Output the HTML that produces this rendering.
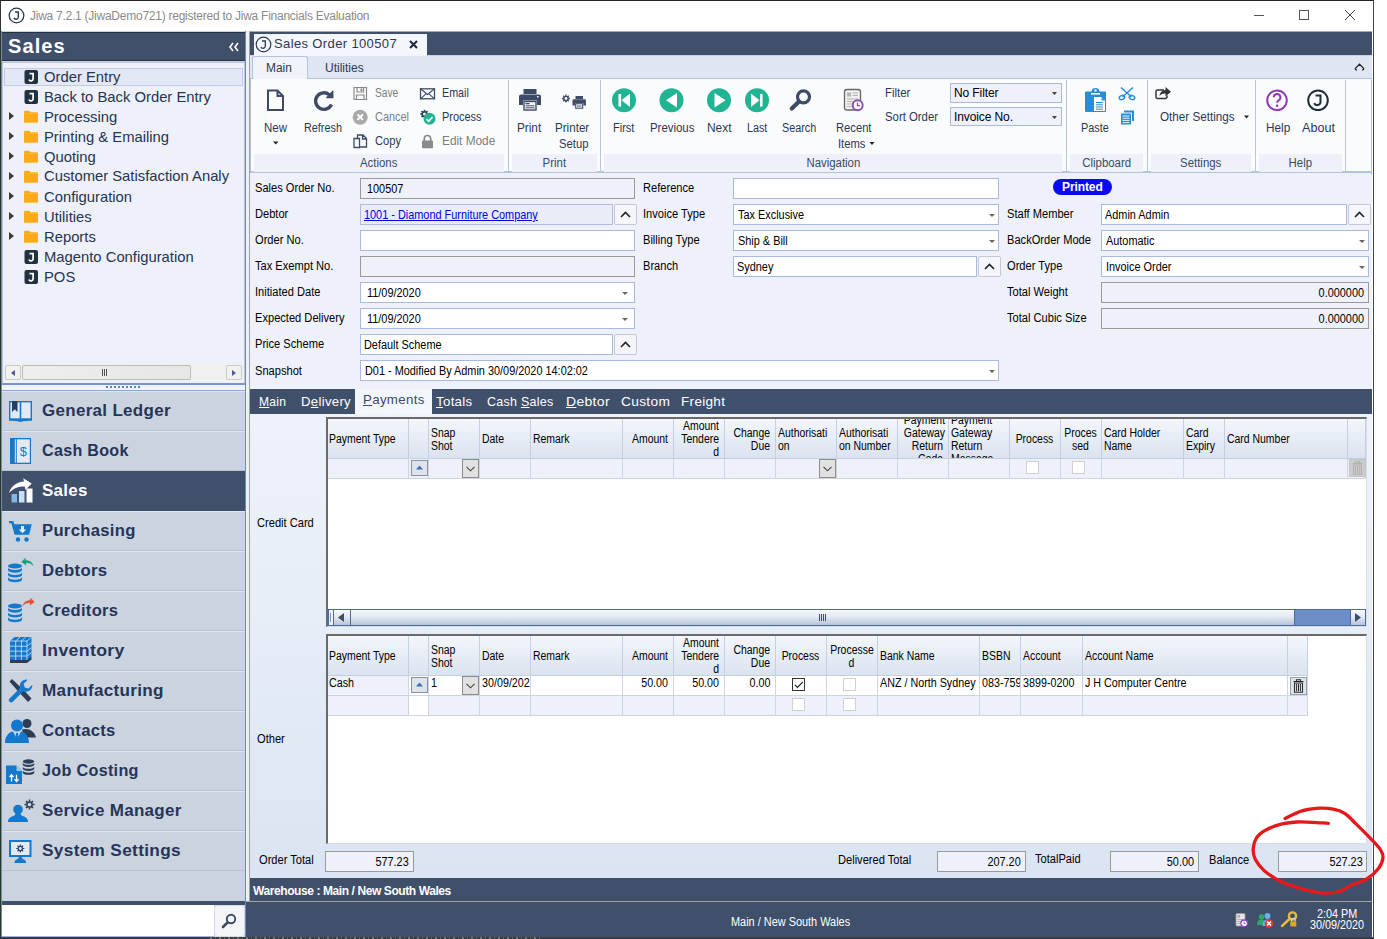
<!DOCTYPE html>
<html>
<head>
<meta charset="utf-8">
<title>Jiwa</title>
<style>
*{box-sizing:border-box;margin:0;padding:0}
html,body{width:1387px;height:939px;overflow:hidden;background:#fff}
body{font-family:"Liberation Sans",sans-serif;font-size:12px;color:#000;position:relative}
.a{position:absolute}
.t{position:absolute;white-space:nowrap;line-height:1}
svg{position:absolute;overflow:visible}
/* window */
#win{left:0;top:0;width:1374px;height:939px;background:#fff;border-left:1px solid #333;border-top:1px solid #222;border-right:1px solid #444}
#app{left:1px;top:31px;width:1371px;height:906px;background:#f0f1f5;border-right:1px solid #a0a0a0}
.dk{background:#40506b}
/* left */
#lp{left:2px;top:31px;width:243px;height:906px;background:#cbd3df}
#tree{left:2px;top:62px;width:243px;height:322px;background:#eef1f9;border:1px solid #b8c4dc}
.tr{position:absolute;left:44px;font-size:14.8px;color:#27344f;white-space:nowrap;line-height:1}
.nb{position:absolute;left:2px;width:243px;height:40px;border-top:1px solid #dfe5ee;border-bottom:1px solid #b9c2d0;background:#cbd3df}
.nb span{position:absolute;left:40px;top:11px;font-weight:bold;font-size:16px;color:#25355a;white-space:nowrap;line-height:1;letter-spacing:.3px;transform-origin:0 0}
/* ribbon */
.rl{position:absolute;font-size:12px;color:#2a3852;white-space:nowrap;line-height:1;transform-origin:0 0}
.rg{position:absolute;top:154px;height:18px;background:#eef1f9;font-size:12px;color:#3a4a66;text-align:center;line-height:18px}
.rs{position:absolute;top:80px;height:92px;width:1px;background:#b9c6de}
/* form */
.fl{position:absolute;font-size:12px;color:#000;white-space:nowrap;line-height:1;transform:scaleX(.925);transform-origin:0 0}
.in{position:absolute;height:21px;background:#fff;border:1px solid #a9bbdc;font-size:12px;line-height:20px;padding-left:4px;white-space:nowrap;overflow:hidden}
.n{display:inline-block;transform:scaleX(.908);transform-origin:0 50%}
.ft .n,.rt .n{transform-origin:100% 50%}
.ro{background:#eef1f9;border-color:#9a9a9a}
.ar:after{content:"";position:absolute;right:3px;top:9px;border:3px solid transparent;border-top:3px solid #666;border-bottom:0}
.dt:after{right:6px}
.up{position:absolute;width:23px;height:21px;background:#f4f6fb;border:1px solid #c3c9d6;border-radius:2px}
.tb{font-size:13px;letter-spacing:.3px}
.ft{background:#eef1f9;border-color:#9a9a9a;text-align:right;padding-right:4px}
/* grid */
.gh{position:absolute;background:linear-gradient(#f3f6fb,#dbe3f0);border-right:1px solid #c4cfe2;border-bottom:1px solid #c4cfe2;font-size:12px;line-height:13px;overflow:hidden}
.gh>div{transform:scaleX(.87);white-space:nowrap}
.hl{transform-origin:0 0}.hr{transform-origin:100% 0}.hc{transform-origin:50% 0}
.gc span{display:inline-block;transform:scaleX(.895)}
.gc .hl{transform-origin:0 0}.gc .hr{transform-origin:100% 0}
.gc{position:absolute;border-right:1px solid #cdd5e3;border-bottom:1px solid #cdd5e3;background:#eef1f9;font-size:12px;line-height:1;overflow:hidden;white-space:nowrap}
.w{background:#fff}
</style>
</head>
<body>
<div id="win" class="a"></div>
<div id="app" class="a"></div>
<!--TITLE-->
<!-- title bar -->
<svg class="a" style="left:8px;top:7px" width="17" height="17" viewBox="0 0 17 17"><circle cx="8.5" cy="8.5" r="7.3" fill="#fff" stroke="#2b3a4a" stroke-width="1.3"/><path d="M7 5h3.3v5.2a2.3 2.3 0 0 1-4.4.7" fill="none" stroke="#2b3a4a" stroke-width="1.4"/></svg>
<div class="t" id="ttl" style="left:30px;top:10px;font-size:12px;color:#8a8a8a;letter-spacing:-.25px">Jiwa 7.2.1 (JiwaDemo721) registered to Jiwa Financials Evaluation</div>
<div class="a" style="left:1254px;top:15px;width:10px;height:1px;background:#555"></div>
<div class="a" style="left:1299px;top:10px;width:10px;height:10px;border:1px solid #555"></div>
<svg style="left:1345px;top:10px" width="10" height="10" viewBox="0 0 10 10"><path d="M0 0L10 10M10 0L0 10" stroke="#444" stroke-width="1"/></svg>
<!-- left panel -->
<div class="a" style="left:1px;top:31px;width:245px;height:906px;background:#6b8bbd"></div>
<div id="lp" class="a"></div>
<div class="a dk" style="left:2px;top:32px;width:243px;height:29px;border-top:1px solid #222f44;border-bottom:1px solid #222f44"></div>
<div class="t" id="saleshdr" style="left:8px;top:36px;font-size:20px;font-weight:bold;color:#fff;letter-spacing:1.1px">Sales</div>
<svg style="left:229px;top:43px" width="10" height="8" viewBox="0 0 10 8"><path d="M4 0L1 4L4 8M9 0L6 4L9 8" fill="none" stroke="#fff" stroke-width="1.6"/></svg>
<div id="tree" class="a"></div>
<div class="a" style="left:4px;top:68px;width:239px;height:18px;background:#e3e8f6;border:1px solid #c3cbe0"></div>
<!-- tree rows -->
<div class="tr" style="top:70px">Order Entry</div>
<div class="tr" style="top:90px">Back to Back Order Entry</div>
<div class="tr" style="top:110px">Processing</div>
<div class="tr" style="top:130px">Printing &amp; Emailing</div>
<div class="tr" style="top:150px">Quoting</div>
<div class="tr" style="top:169px">Customer Satisfaction Analy</div>
<div class="tr" style="top:190px">Configuration</div>
<div class="tr" style="top:210px">Utilities</div>
<div class="tr" style="top:230px">Reports</div>
<div class="tr" style="top:250px">Magento Configuration</div>
<div class="tr" style="top:270px">POS</div>
<!--TREEICONS-->
<!-- tree scrollbar -->
<div class="a" style="left:3px;top:363px;width:241px;height:20px;background:#f0f0f1"></div>
<div class="a" style="left:5px;top:365px;width:16px;height:15px;background:#f1f1f1;border:1px solid #c9c9c9;border-radius:2px"></div>
<div class="a" style="left:22px;top:365px;width:169px;height:15px;background:linear-gradient(90deg,#eee,#e6e6e6);border:1px solid #bdbdbd;border-radius:2px"></div>
<div class="a" style="left:226px;top:365px;width:16px;height:15px;background:#f1f1f1;border:1px solid #c9c9c9;border-radius:2px"></div>
<svg style="left:11px;top:370px" width="4" height="6" viewBox="0 0 4 6"><path d="M4 0L0 3L4 6z" fill="#4a5b8c"/></svg>
<svg style="left:232px;top:370px" width="4" height="6" viewBox="0 0 4 6"><path d="M0 0L4 3L0 6z" fill="#4a5b8c"/></svg>
<div class="a" style="left:102px;top:369px;width:1px;height:7px;background:#555;box-shadow:2px 0 0 #555,4px 0 0 #555"></div>
<!-- splitter -->
<div class="a" style="left:2px;top:383px;width:243px;height:8px;background:#eef3fc;border-top:2px solid #7b96c4;border-bottom:1px solid #8fa6cf"></div>
<div class="a" style="left:106px;top:386px;width:34px;height:2px;background:repeating-linear-gradient(90deg,#5a7fc8 0 2px,transparent 2px 4px)"></div>
<!-- nav buttons -->
<div class="nb" style="top:391px"><span style="transform:scaleX(1.060)">General Ledger</span></div>
<div class="nb" style="top:431px"><span style="transform:scaleX(1.005)">Cash Book</span></div>
<div class="nb" style="top:471px;background:#40506b;border-color:#40506b"><span style="color:#fff;transform:scaleX(1.058)">Sales</span></div>
<div class="nb" style="top:511px"><span style="transform:scaleX(1.039)">Purchasing</span></div>
<div class="nb" style="top:551px"><span style="transform:scaleX(1.047)">Debtors</span></div>
<div class="nb" style="top:591px"><span style="transform:scaleX(1.034)">Creditors</span></div>
<div class="nb" style="top:631px"><span style="transform:scaleX(1.107)">Inventory</span></div>
<div class="nb" style="top:671px"><span style="transform:scaleX(1.068)">Manufacturing</span></div>
<div class="nb" style="top:711px"><span style="transform:scaleX(1.040)">Contacts</span></div>
<div class="nb" style="top:751px"><span style="transform:scaleX(1.011)">Job Costing</span></div>
<div class="nb" style="top:791px"><span style="transform:scaleX(1.061)">Service Manager</span></div>
<div class="nb" style="top:831px"><span style="transform:scaleX(1.077)">System Settings</span></div>
<svg style="left:0;top:0" width="250" height="939" viewBox="0 0 250 939">
<defs>
<g id="coins"><ellipse cx="0" cy="0" rx="7" ry="2.6"/><path d="M-7 1.5v2.6a7 2.6 0 0 0 14 0v-2.6a7 2.6 0 0 1-14 0z"/><path d="M-7 6.3v2.6a7 2.6 0 0 0 14 0v-2.6a7 2.6 0 0 1-14 0z"/><path d="M-7 11.1v2.6a7 2.6 0 0 0 14 0v-2.6a7 2.6 0 0 1-14 0z"/></g>
<g id="gear"><circle r="2.6" fill="none" stroke="#2c3e55" stroke-width="1.5"/><path d="M0-5v2M0 3v2M-5 0h2M3 0h2M-3.5-3.5l1.4 1.4M2.1 2.1l1.4 1.4M-3.5 3.5l1.4-1.4M2.1-2.1l1.4-1.4" stroke="#2c3e55" stroke-width="1.5"/></g>
<g id="fold"><path d="M0 2.2a1 1 0 0 1 1-1h4.2l1.5 1.6h6.3a1 1 0 0 1 1 1v8.5a1 1 0 0 1-1 1h-12a1 1 0 0 1-1-1z" fill="#fbab18"/><path d="M0 4.6h14v-.9a1 1 0 0 0-1-1h-6.3l-1.2 1.1h-5.5z" fill="#ffc24a" opacity=".55"/></g>
<g id="jic"><rect width="13.5" height="14" rx="2" fill="#22313f"/><path d="M5 3.6h3.6v5.2a2.1 2.1 0 0 1-4.1.6" fill="none" stroke="#fff" stroke-width="1.7"/></g>
<path id="tri" d="M0 0L5 4L0 8z" fill="#3a3a3a"/>
</defs>
<!-- tree icons -->
<use href="#jic" x="24.5" y="70"/><use href="#jic" x="24.5" y="90"/><use href="#jic" x="24.5" y="250"/><use href="#jic" x="24.5" y="270"/>
<use href="#fold" x="24" y="109.5"/><use href="#fold" x="24" y="129.5"/><use href="#fold" x="24" y="149.5"/><use href="#fold" x="24" y="169.5"/><use href="#fold" x="24" y="189.5"/><use href="#fold" x="24" y="209.5"/><use href="#fold" x="24" y="229.5"/>
<use href="#tri" x="9" y="112"/><use href="#tri" x="9" y="132"/><use href="#tri" x="9" y="152"/><use href="#tri" x="9" y="172"/><use href="#tri" x="9" y="192"/><use href="#tri" x="9" y="212"/><use href="#tri" x="9" y="232"/>
<!-- General Ledger -->
<g><rect x="9.7" y="401.7" width="21.6" height="17.6" fill="#e4eaf3" stroke="#1479cc" stroke-width="1.4"/><path d="M20.5 401v19" stroke="#1479cc" stroke-width="1.6"/><path d="M9 418.5h23v2.3c-4 0-8 0-11.5 1.2c-3.500-1.200-7.500-1.200-11.500-1.200z" fill="#1479cc"/><path d="M12 401h5.500v11l-2.750-2.800l-2.750 2.800z" fill="#2c3e55"/></g>
<!-- Cash Book -->
<g><rect x="10" y="438" width="21" height="26" fill="#1479cc"/><rect x="14.8" y="439.300" width="1" height="23.400" fill="#e4eaf3"/><rect x="16.800" y="439.300" width="13" height="23.400" fill="#e4eaf3"/><text x="23.300" y="456" font-family="Liberation Sans" font-size="13" fill="#1479cc" text-anchor="middle">$</text></g>
<!-- Sales -->
<g><rect x="11.500" y="494" width="5.500" height="8.500" fill="#7fb6e6"/><rect x="19" y="491" width="5.500" height="11.500" fill="#c6e0f5"/><rect x="26.500" y="488.500" width="6" height="14" fill="#fff"/><path d="M9 493c2-7 8-11 15-11.500l-.8-3.300l8.500 5.300l-6.200 6.500l-.7-3.300c-6-.8-11.500 1.500-15.800 6.300z" fill="#fff"/></g>
<!-- Purchasing -->
<g fill="#1479cc"><path d="M9 521h4.300l1 3.300h17.500l-2.700 10.500h-14.500l-3.200-11.500h-2.400z"/><circle cx="18" cy="539.500" r="2.200"/><circle cx="26.500" cy="539.500" r="2.200"/><path d="M21 526h3v3.500h2.300l-3.800 3.800l-3.800-3.800h2.300z" fill="#e4eaf3"/></g>
<!-- Debtors -->
<g fill="#1479cc"><use href="#coins" x="15" y="566"/></g>
<path d="M33.500 566.500c-1.500-2.800-4.500-3.800-7.500-3.500l.3 2.600l-5-3.700l4.200-4.200l.3 2.600c4 0 7 2 7.700 6.200z" fill="#1aa37a"/>
<!-- Creditors -->
<g fill="#1479cc"><use href="#coins" x="15" y="606"/></g>
<path d="M22.500 606.500c.7-4.200 3.700-6.200 7.700-6.200l.3-2.600l4.200 4.200l-5 3.700l.3-2.600c-3-.3-6 .7-7.500 3.500z" fill="#e8503a"/>
<!-- Inventory -->
<g><path d="M10 660v3h17l4.500-3.500v-3z" fill="#2c3e55"/><path d="M10 641l4.500-4h17l0 19.500l-4.500 3.500h-17z" fill="#1479cc"/><path d="M10 646.200h17l4.500-3.500M10 651.200h17l4.500-3.500M10 656h17l4.500-3.500M15.700 641v19M21.400 641v19M27 641v19M14.500 637l-0 0M10 641h17l4.500-4M20 637l-4.300 4M25.700 637l-4.300 4" stroke="#cfe3f6" stroke-width=".8" fill="none"/></g>
<!-- Manufacturing -->
<g><path d="M9.500 681.500l2.500-2.500l14 13.500l5.500 6l-3.500 3.500l-5.500-6l-3-3z" fill="#2c3e55"/><path d="M26 679.500a6.500 6.500 0 0 0-6 8.500l-10.500 10.500a2.300 2.300 0 0 0 3.300 3.300l10.500-10.500a6.500 6.500 0 0 0 9-6.500l-3.800 3.800l-3.800-1l-1-3.800l3.800-3.800a6.500 6.500 0 0 0-1.500-.5z" fill="#1479cc"/></g>
<!-- Contacts -->
<g><circle cx="27" cy="723.500" r="4.500" fill="#2c3e55"/><path d="M22 729.500c6-2 12.500 1 14 8h-12z" fill="#2c3e55"/><circle cx="17" cy="725.500" r="6" fill="#1479cc"/><path d="M5 743c0-7 4-11 8-11.500l4 8l4-8c4 .5 8 4.500 8 11.500z" fill="#1479cc"/><path d="M16 733h2l.8 6l-1.800 2.500l-1.800-2.500z" fill="#1479cc"/></g>
<!-- Job Costing -->
<g><path d="M6 765.500h10.500l5.500 5.500v13h-16z" fill="#1479cc"/><path d="M16.500 765.500v5.500h5.500z" fill="#9cc9ee"/><path d="M11.500 775v6.500M9.500 777l2-2.300l2 2.300M16.500 774.800v6.500M14.500 779.300l2 2.300l2-2.300" stroke="#fff" stroke-width="1.300" fill="none"/><g fill="#2c3e55" transform="translate(28.500 761.500) scale(.82)"><use href="#coins"/></g></g>
<!-- Service Manager -->
<g><circle cx="18" cy="809.500" r="4.800" fill="#1479cc"/><path d="M8 822c0-4 3-5.500 6.500-6.500l1.500-2.500h4l1.500 2.500c3.500 1 6.500 2.500 6.500 6.500z" fill="#1479cc"/><use href="#gear" x="29.500" y="804.500"/></g>
<!-- System Settings -->
<g><rect x="10" y="841" width="20.500" height="15" fill="#e4eaf3" stroke="#1479cc" stroke-width="2"/><use href="#gear" x="20.300" y="848.500" transform="translate(4.060 169.700) scale(.8)"/><path d="M14.500 863c0-3 2.500-4.500 5.800-4.500s5.800 1.500 5.800 4.500z" fill="#1479cc"/><circle cx="20.300" cy="858.500" r="2" fill="#1479cc"/></g>
</svg>

<!-- search -->
<div class="a" style="left:2px;top:901px;width:243px;height:4px;background:#40506b"></div>
<div class="a" style="left:2px;top:905px;width:212px;height:32px;background:#fff;border-bottom:1px solid #9db3da"></div>
<div class="a" style="left:214px;top:905px;width:31px;height:32px;background:#f4f5f8;border:1px solid #d5d8df;border-radius:3px"></div>
<svg style="left:221px;top:913px" width="16" height="16" viewBox="0 0 16 16"><circle cx="10" cy="6" r="4.200" fill="none" stroke="#3d4b66" stroke-width="1.900"/><path d="M6.800 9.300L2 14" stroke="#3d4b66" stroke-width="2.600" stroke-linecap="round"/></svg>
<!--LEFT-->
<div class="a" style="left:249px;top:31px;width:1px;height:906px;background:#a0a0a0"></div><div class="a" style="left:249px;top:31px;width:1123px;height:1px;background:#a9a9a9"></div>
<!--DOCTABS-->
<!-- doc tabs -->
<div class="a dk" style="left:250px;top:32px;width:1122px;height:23px"></div><div class="a" style="left:250px;top:55px;width:1122px;height:1px;background:#c5d3e8"></div>
<div class="a" style="left:254px;top:34px;width:173px;height:22px;background:#f3f6fc"></div>
<svg style="left:255px;top:36px" width="17" height="17" viewBox="0 0 17 17"><circle cx="8.5" cy="8.5" r="7.3" fill="none" stroke="#2b3a4a" stroke-width="1.2"/><path d="M7 5h3.3v5.200a2.300 2.300 0 0 1-4.400.7" fill="none" stroke="#2b3a4a" stroke-width="1.3"/></svg>
<div class="t" id="dtab" style="left:274px;top:37px;font-size:13px;color:#2a3852;letter-spacing:.37px">Sales Order 100507</div>
<svg style="left:409px;top:40px" width="9" height="9" viewBox="0 0 9 9"><path d="M1 1L8 8M8 1L1 8" stroke="#1e2a3e" stroke-width="2"/></svg>
<!-- ribbon tabs -->
<div class="a" style="left:250px;top:56px;width:1122px;height:23px;background:#dfe5f3"></div>
<div class="a" style="left:250px;top:78px;width:1122px;height:95px;background:#fafbfd;border:1px solid #b4c3df;border-width:1px 1px 2px 1px"></div>
<div class="a" style="left:252px;top:56px;width:56px;height:23px;background:#f0f3fa;border:1px solid #b4c3df;border-bottom:0;border-radius:3px 3px 0 0"></div>
<div class="rl" style="left:266px;top:62px;transform:scaleX(0.992)">Main</div>
<div class="rl" style="left:325px;top:62px;transform:scaleX(1.001)">Utilities</div>
<svg style="left:1354px;top:63px" width="11" height="8" viewBox="0 0 11 8"><path d="M3 6.800c-1.500.3-2.300-.8-1.200-1.900L5.500 1.200L9.200 4.900c1.100 1.100.3 2.200-1.200 1.900" fill="none" stroke="#222" stroke-width="1.300"/></svg>
<!-- group label strips -->
<div class="rg" style="left:254px;width:250px"><span style="display:inline-block;transform:scaleX(.95)">Actions</span></div>
<div class="rg" style="left:512px;width:85px"><span style="display:inline-block;transform:scaleX(.95)">Print</span></div>
<div class="rg" style="left:604px;width:458px"><span style="display:inline-block;transform:scaleX(.95)">Navigation</span></div>
<div class="rg" style="left:1070px;width:73px"><span style="display:inline-block;transform:scaleX(.95)">Clipboard</span></div>
<div class="rg" style="left:1151px;width:100px"><span style="display:inline-block;transform:scaleX(.95)">Settings</span></div>
<div class="rg" style="left:1259px;width:83px"><span style="display:inline-block;transform:scaleX(.95)">Help</span></div>
<div class="rs" style="left:508px"></div><div class="rs" style="left:600px"></div><div class="rs" style="left:1066px"></div><div class="rs" style="left:1147px"></div><div class="rs" style="left:1255px"></div><div class="rs" style="left:1345px"></div>
<!-- labels -->
<div class="rl" style="left:264px;top:122px;transform:scaleX(0.958)">New</div>
<div class="rl" style="left:304px;top:122px;transform:scaleX(0.902)">Refresh</div>
<div class="rl" style="left:375px;top:87px;color:#7d7d7d;transform:scaleX(0.848)">Save</div>
<div class="rl" style="left:375px;top:111px;color:#7d7d7d;transform:scaleX(0.910)">Cancel</div>
<div class="rl" style="left:375px;top:135px;transform:scaleX(0.928)">Copy</div>
<div class="rl" style="left:442px;top:87px;transform:scaleX(0.893)">Email</div>
<div class="rl" style="left:442px;top:111px;transform:scaleX(0.909)">Process</div>
<div class="rl" style="left:442px;top:135px;color:#7d7d7d;transform:scaleX(0.985)">Edit Mode</div>
<div class="rl" style="left:517px;top:122px;transform:scaleX(0.980)">Print</div>
<div class="rl" style="left:555px;top:122px;transform:scaleX(0.968)">Printer</div>
<div class="rl" style="left:559px;top:138px;transform:scaleX(0.938)">Setup</div>
<div class="rl" style="left:613px;top:122px;transform:scaleX(0.917)">First</div>
<div class="rl" style="left:650px;top:122px;transform:scaleX(0.951)">Previous</div>
<div class="rl" style="left:707px;top:122px;transform:scaleX(0.992)">Next</div>
<div class="rl" style="left:747px;top:122px;transform:scaleX(0.895)">Last</div>
<div class="rl" style="left:782px;top:122px;transform:scaleX(0.899)">Search</div>
<div class="rl" style="left:836px;top:122px;transform:scaleX(0.933)">Recent</div>
<div class="rl" style="left:838px;top:138px;transform:scaleX(0.937)">Items</div>
<div class="rl" style="left:885px;top:87px;transform:scaleX(0.949)">Filter</div>
<div class="rl" style="left:885px;top:111px;transform:scaleX(0.946)">Sort Order</div>
<div class="rl" style="left:1081px;top:122px;transform:scaleX(0.903)">Paste</div>
<div class="rl" style="left:1160px;top:111px;transform:scaleX(0.974)">Other Settings</div>
<div class="rl" style="left:1266px;top:122px;transform:scaleX(0.980)">Help</div>
<div class="rl" style="left:1302px;top:122px;transform:scaleX(1.049)">About</div>
<!-- combos -->
<div class="a" style="left:950px;top:83px;width:112px;height:20px;background:#eef1f9;border:1px solid #a9bbdc"></div>
<div class="a" style="left:950px;top:107px;width:112px;height:19px;background:#eef1f9;border:1px solid #a9bbdc"></div>
<div class="t" style="left:954px;top:87px;font-size:12px;letter-spacing:-.1px">No Filter</div>
<div class="t" style="left:954px;top:111px;font-size:12px;letter-spacing:-.1px">Invoice No.</div>
<svg style="left:0;top:0" width="1387" height="180" viewBox="0 0 1387 180">
<!-- New -->
<path d="M268 90.500h9.500l5.500 5.500v14h-15zM277.500 90.500v5.500h5.500" fill="none" stroke="#3d4b66" stroke-width="2"/>
<path d="M273 141.500h5.500l-2.750 3z" fill="#222"/>
<!-- Refresh -->
<path d="M331.500 104.500a8.300 8.300 0 1 1-2.200-9.800" fill="none" stroke="#3d4b66" stroke-width="3.400"/><path d="M326 97.500l7.200.3l-.2-7.500z" fill="#3d4b66"/><path d="M325.800 98.200h7.600v-7.600z" fill="#3d4b66"/>
<!-- Save -->
<path d="M354 87.500h12.500v12h-12.500zM357 87.500v4.500h6.500v-4.500M356.500 99.500v-4.500h7.500v4.500" fill="none" stroke="#8a8a8a" stroke-width="1.200"/><rect x="360.500" y="88.500" width="1.800" height="2.500" fill="#8a8a8a"/>
<!-- Cancel -->
<circle cx="360.200" cy="117.200" r="7.500" fill="#a9a9a9"/><path d="M357.500 114.500l5.400 5.400M362.900 114.500l-5.400 5.400" stroke="#fff" stroke-width="2"/>
<!-- Copy -->
<path d="M354 138.500h5.500v9h-5.500zM357.500 138v-3h5.500l3.500 3.500v8.500h-6.500M362.500 135v4h4" fill="none" stroke="#3d4b66" stroke-width="1.300"/>
<!-- Email -->
<rect x="420.500" y="88.800" width="14" height="10" fill="none" stroke="#3d4b66" stroke-width="1.300"/><path d="M420.500 88.800l7 5.700l7-5.700M420.500 98.800l5.500-5M434.500 98.800l-5.500-5" fill="none" stroke="#3d4b66" stroke-width="1.100"/>
<!-- Process -->
<g transform="translate(424.500 114)"><circle r="2.300" fill="none" stroke="#2c3e55" stroke-width="1.600"/><path d="M0-4.300v1.800M0 2.500v1.800M-4.300 0h1.800M2.500 0h1.800M-3-3l1.200 1.200M1.800 1.800l1.200 1.200M-3 3l1.200-1.200M1.800-1.800l1.200-1.200" stroke="#2c3e55" stroke-width="1.500"/></g>
<circle cx="429.500" cy="118.800" r="6" fill="#20b493"/><path d="M426.500 119l2.200 2.200l3.800-4.200" fill="none" stroke="#fff" stroke-width="1.700"/>
<!-- Edit mode lock -->
<rect x="422" y="140.500" width="11" height="7.800" rx="1" fill="#8a8a8a"/><path d="M424.300 141v-2.300a3.200 3.200 0 0 1 6.400 0v2.300" fill="none" stroke="#8a8a8a" stroke-width="1.700"/>
<!-- Print -->
<g fill="#3d4b66"><rect x="523.500" y="89" width="13" height="5"/><path d="M519 96.500a2 2 0 0 1 2-2h18a2 2 0 0 1 2 2v8.500h-4v-4.500h-14v4.500h-4z"/><rect x="524" y="101.500" width="12" height="8.500" fill="none" stroke="#3d4b66" stroke-width="1.400"/><rect x="525.500" y="103" width="4" height="1.300"/><rect x="525.500" y="105.300" width="9" height="1"/><rect x="525.500" y="107.300" width="9" height="1"/></g><rect x="537" y="96" width="1.500" height="1.500" fill="#fff"/>
<!-- Printer setup -->
<g transform="translate(566 98.500) scale(.92)"><circle r="2.300" fill="none" stroke="#3d4b66" stroke-width="1.600"/><path d="M0-4.300v1.800M0 2.500v1.800M-4.300 0h1.800M2.500 0h1.800M-3-3l1.200 1.200M1.800 1.800l1.200 1.200M-3 3l1.200-1.200M1.800-1.800l1.200-1.200" stroke="#3d4b66" stroke-width="1.500"/></g>
<g fill="#3d4b66"><rect x="575.500" y="96" width="7.500" height="3"/><path d="M572.500 100.500a1.200 1.200 0 0 1 1.200-1.200h11a1.200 1.200 0 0 1 1.200 1.200v5h-2.500v-2.500h-8.400v2.500h-2.500z"/><rect x="575.700" y="103.700" width="7" height="4.500" fill="none" stroke="#3d4b66" stroke-width="1.100"/><rect x="577" y="105.500" width="4.500" height="1"/></g>
<!-- nav circles -->
<g fill="#20b493"><circle cx="624" cy="100.300" r="12"/><circle cx="671.500" cy="100.300" r="12"/><circle cx="719" cy="100.300" r="12"/><circle cx="757" cy="100.300" r="12"/></g>
<g fill="#fff"><rect x="618.500" y="94" width="2.600" height="12.600"/><path d="M630 93.500v13.600l-8.500-6.800z"/>
<path d="M677 93v14.600l-11-7.300z"/>
<path d="M714.500 93v14.600l11-7.300z"/>
<rect x="760" y="94" width="2.600" height="12.600"/><path d="M751 93.500v13.600l8.500-6.800z"/></g>
<!-- Search -->
<circle cx="803.500" cy="96.800" r="6" fill="none" stroke="#3d4b66" stroke-width="3.200"/><path d="M798.800 101.700l-7 6.800" stroke="#3d4b66" stroke-width="4.200" stroke-linecap="round"/>
<!-- Recent items -->
<rect x="844.500" y="89.500" width="16" height="20.500" rx="2.500" fill="#f0f0f0" stroke="#666" stroke-width="1.300"/><rect x="847" y="92.500" width="4" height="4" fill="#b5b5b5"/><path d="M852.500 93h5.500M852.500 95.500h5.500M847 99h11M847 101.500h6M847 104h5M847 106.500h5" stroke="#b5b5b5" stroke-width="1.100"/>
<circle cx="857.700" cy="105.300" r="5" fill="#fff" stroke="#8e4bb3" stroke-width="1.900"/><path d="M857.500 102.500v3.200h2.600" fill="none" stroke="#8e4bb3" stroke-width="1.300"/>
<path d="M869.500 142h5l-2.500 3z" fill="#222"/>
<!-- combo arrows -->
<path d="M1052 92h5l-2.500 3zM1052 116h5l-2.500 3z" fill="#444"/>
<!-- Paste -->
<g><path d="M1085 92.500a1 1 0 0 1 1-1h5.500a4 3.500 0 0 1 8 0h5.500a1 1 0 0 1 1 1v18.500a1 1 0 0 1-1 1h-19a1 1 0 0 1-1-1z" fill="#2a8dd4"/><circle cx="1095.500" cy="90.500" r="1.200" fill="#fff"/><rect x="1091" y="93" width="9" height="1.600" fill="#fff"/><path d="M1094 97h7.500l3.500 3.500v10.500h-11z" fill="#fff"/><path d="M1101.500 97v3.500h3.500z" fill="#2a8dd4"/><path d="M1096 102.500h7M1096 104.800h7M1096 107h7M1096 109.200h7" stroke="#2a8dd4" stroke-width="1"/></g>
<!-- scissors -->
<g fill="none" stroke="#2a8dd4" stroke-width="1.500"><path d="M1121 87.500l10.500 9.500M1133 87.500l-10.500 9.500"/><ellipse cx="1122" cy="97.500" rx="2.800" ry="2" transform="rotate(-20 1122 97.500)"/><ellipse cx="1132" cy="97.500" rx="2.800" ry="2" transform="rotate(20 1132 97.500)"/></g>
<!-- copy2 -->
<g><path d="M1124 110.500h10v10.500h-2v-8.500h-8z" fill="#2a8dd4"/><rect x="1121" y="113.500" width="10" height="11" fill="#2a8dd4"/><path d="M1122.500 116h7M1122.500 118.200h7M1122.500 120.400h7M1122.500 122.600h7" stroke="#fff" stroke-width=".9"/></g>
<!-- share -->
<path d="M1164 90h-6.500a1.500 1.500 0 0 0-1.500 1.500v5.500a1.500 1.500 0 0 0 1.500 1.500h8a1.500 1.500 0 0 0 1.500-1.500v-1.500" fill="none" stroke="#333" stroke-width="1.500"/><path d="M1159.500 96c.3-4 3-5.800 6-5.800v-3.200l5.500 4.800l-5.500 4.800v-3.100c-2.500-.2-4.500.5-6 2.500z" fill="#333"/>
<path d="M1244 115.500h5l-2.500 3z" fill="#222"/>
<!-- Help -->
<circle cx="1277" cy="100.300" r="9.800" fill="none" stroke="#8e3bb3" stroke-width="2"/><path d="M1273.800 97.300a3.300 3.300 0 1 1 4.800 3c-1.200.7-1.500 1.300-1.500 2.500" fill="none" stroke="#8e3bb3" stroke-width="2"/><circle cx="1277.100" cy="105.800" r="1.300" fill="#8e3bb3"/>
<!-- About -->
<circle cx="1318" cy="100.300" r="9.800" fill="none" stroke="#1f2d3a" stroke-width="2"/><path d="M1315.500 95.500h5v6.500a3.300 3.300 0 0 1-6.300 1.200" fill="none" stroke="#1f2d3a" stroke-width="2"/>
</svg>

<!--RIBBON-->
<div class="a" style="left:250px;top:174px;width:1122px;height:216px;background:#eef1f9"></div>
<div class="fl" style="left:255px;top:182px">Sales Order No.</div>
<div class="fl" style="left:255px;top:208px">Debtor</div>
<div class="fl" style="left:255px;top:234px">Order No.</div>
<div class="fl" style="left:255px;top:260px">Tax Exempt No.</div>
<div class="fl" style="left:255px;top:286px">Initiated Date</div>
<div class="fl" style="left:255px;top:312px">Expected Delivery</div>
<div class="fl" style="left:255px;top:338px">Price Scheme</div>
<div class="fl" style="left:255px;top:365px">Snapshot</div>
<div class="in ro" style="left:360px;top:178px;width:275px;padding-left:6px"><span class="n">100507</span></div>
<div class="in" style="left:360px;top:204px;width:253px;padding-left:3px;background:#e9edf7;border-color:#b3bdd3"><span class="n" style="color:#0000e0;text-decoration:underline">1001 - Diamond Furniture Company</span></div>
<div class="up" style="left:614px;top:204px"></div>
<div class="in" style="left:360px;top:230px;width:275px"></div>
<div class="in ro" style="left:360px;top:256px;width:275px"></div>
<div class="in ar dt" style="left:360px;top:282px;width:275px;padding-left:6px"><span class="n">11/09/2020</span></div>
<div class="in ar dt" style="left:360px;top:308px;width:275px;padding-left:6px"><span class="n">11/09/2020</span></div>
<div class="in" style="left:360px;top:334px;width:253px;padding-left:3px"><span class="n">Default Scheme</span></div>
<div class="up" style="left:614px;top:334px"></div>
<div class="in ar" style="left:360px;top:360px;width:639px"><span class="n">D01 - Modified By Admin 30/09/2020 14:02:02</span></div>
<div class="fl" style="left:643px;top:182px">Reference</div>
<div class="fl" style="left:643px;top:208px">Invoice Type</div>
<div class="fl" style="left:643px;top:234px">Billing Type</div>
<div class="fl" style="left:643px;top:260px">Branch</div>
<div class="in" style="left:733px;top:178px;width:266px"></div>
<div class="in ar" style="left:733px;top:204px;width:266px"><span class="n">Tax Exclusive</span></div>
<div class="in ar" style="left:733px;top:230px;width:266px"><span class="n">Ship &amp; Bill</span></div>
<div class="in" style="left:733px;top:256px;width:244px;padding-left:3px"><span class="n">Sydney</span></div>
<div class="up" style="left:978px;top:256px"></div>
<div class="a" style="left:1053px;top:179px;width:59px;height:16px;border-radius:8px;background:#0a0af0"></div>
<div class="t" style="left:1062px;top:181px;font-size:12px;font-weight:bold;color:#fff;letter-spacing:-.1px">Printed</div>
<div class="fl" style="left:1007px;top:208px">Staff Member</div>
<div class="fl" style="left:1007px;top:234px">BackOrder Mode</div>
<div class="fl" style="left:1007px;top:260px">Order Type</div>
<div class="fl" style="left:1007px;top:286px">Total Weight</div>
<div class="fl" style="left:1007px;top:312px">Total Cubic Size</div>
<div class="in" style="left:1101px;top:204px;width:246px;padding-left:3px"><span class="n">Admin Admin</span></div>
<div class="up" style="left:1348px;top:204px"></div>
<div class="in ar" style="left:1101px;top:230px;width:268px"><span class="n">Automatic</span></div>
<div class="in ar" style="left:1101px;top:256px;width:268px"><span class="n">Invoice Order</span></div>
<div class="in ro rt" style="left:1101px;top:282px;width:268px;text-align:right;padding-right:4px"><span class="n">0.000000</span></div>
<div class="in ro rt" style="left:1101px;top:308px;width:268px;text-align:right;padding-right:4px"><span class="n">0.000000</span></div>
<svg style="left:0;top:0" width="1387" height="400" viewBox="0 0 1387 400"><g fill="none" stroke="#222" stroke-width="1.600"><path d="M621 217l4.500-4.500l4.500 4.500"/><path d="M621 347l4.500-4.500l4.500 4.500"/><path d="M985 269l4.500-4.500l4.500 4.500"/><path d="M1355 217l4.500-4.500l4.500 4.500"/></g></svg>
<!--FORM-->
<!--TABS2-->
<div class="a" style="left:250px;top:390px;width:1122px;height:24px;background:#eef1f9"></div>
<div class="a dk" style="left:250px;top:389px;width:1122px;height:25px"></div>
<div class="a" style="left:355px;top:389px;width:77px;height:26px;background:#f3f7fd"></div>
<div class="t tb" style="left:259px;top:395px;color:#fff;transform:scaleX(0.928);transform-origin:0 0"><u>M</u>ain</div>
<div class="t tb" style="left:301px;top:395px;color:#fff;transform:scaleX(1.012);transform-origin:0 0">D<u>e</u>livery</div>
<div class="t tb" style="left:436.2px;top:395px;color:#fff;transform:scaleX(1.020);transform-origin:0 0"><u>T</u>otals</div>
<div class="t tb" style="left:487px;top:395px;color:#fff;transform:scaleX(0.958);transform-origin:0 0">Cash <u>S</u>ales</div>
<div class="t tb" style="left:565.7px;top:395px;color:#fff;transform:scaleX(1.074);transform-origin:0 0"><u>D</u>ebtor</div>
<div class="t tb" style="left:620.7px;top:395px;color:#fff;transform:scaleX(1.056);transform-origin:0 0">Custom</div>
<div class="t tb" style="left:680.7px;top:395px;color:#fff;transform:scaleX(1.040);transform-origin:0 0">Freight</div>
<div class="t tb" style="left:363px;top:393px;color:#3d4b66;transform:scaleX(1.023);transform-origin:0 0"><u>P</u>ayments</div>
<div class="a" style="left:250px;top:414px;width:1122px;height:464px;background:linear-gradient(#eef2fa,#e6edf7 45%,#dae4f2)"></div>
<div class="fl" style="left:257px;top:517px">Credit Card</div>
<div class="fl" style="left:257px;top:733px">Other</div>
<div class="a" style="left:326px;top:417px;width:1041px;height:210px;background:#fff;border:1px solid #6e6e6e;border-width:2px 1px 1px 2px;border-color:#6a6a6a #d8dde8 #d8dde8 #6a6a6a"></div>
<div class="gh" style="left:328px;top:419px;width:81px;height:40px"><div class="hl" style="position:absolute;left:1px;right:0;top:14.3px;text-align:left">Payment Type</div></div>
<div class="gh" style="left:409px;top:419px;width:20px;height:40px"><div class="hl" style="position:absolute;left:2px;right:0;top:14.3px;text-align:left"></div></div>
<div class="gh" style="left:429px;top:419px;width:51px;height:40px"><div class="hl" style="position:absolute;left:2px;right:0;top:7.8px;text-align:left">Snap<br>Shot</div></div>
<div class="gh" style="left:480px;top:419px;width:51px;height:40px"><div class="hl" style="position:absolute;left:2px;right:0;top:14.3px;text-align:left">Date</div></div>
<div class="gh" style="left:531px;top:419px;width:92px;height:40px"><div class="hl" style="position:absolute;left:2px;right:0;top:14.3px;text-align:left">Remark</div></div>
<div class="gh" style="left:623px;top:419px;width:51px;height:40px"><div class="hr" style="position:absolute;left:0;right:5px;top:14.3px;text-align:right">Amount</div></div>
<div class="gh" style="left:674px;top:419px;width:51px;height:40px"><div class="hr" style="position:absolute;left:0;right:5px;top:1.3px;text-align:right">Amount<br>Tendere<br>d</div></div>
<div class="gh" style="left:725px;top:419px;width:51px;height:40px"><div class="hr" style="position:absolute;left:0;right:5px;top:7.8px;text-align:right">Change<br>Due</div></div>
<div class="gh" style="left:776px;top:419px;width:61px;height:40px"><div class="hl" style="position:absolute;left:2px;right:0;top:7.8px;text-align:left">Authorisati<br>on</div></div>
<div class="gh" style="left:837px;top:419px;width:61px;height:40px"><div class="hl" style="position:absolute;left:2px;right:0;top:7.8px;text-align:left">Authorisati<br>on Number</div></div>
<div class="gh" style="left:898px;top:419px;width:51px;height:40px"><div class="hr" style="position:absolute;left:0;right:5px;top:-5.2px;text-align:right">Payment<br>Gateway<br>Return<br>Code</div></div>
<div class="gh" style="left:949px;top:419px;width:61px;height:40px"><div class="hl" style="position:absolute;left:2px;right:0;top:-5.2px;text-align:left">Payment<br>Gateway<br>Return<br>Message</div></div>
<div class="gh" style="left:1010px;top:419px;width:51px;height:40px"><div class="hc" style="position:absolute;left:0;right:1px;top:14.3px;text-align:center">Process</div></div>
<div class="gh" style="left:1061px;top:419px;width:41px;height:40px"><div class="hc" style="position:absolute;left:0;right:1px;top:7.8px;text-align:center">Proces<br>sed</div></div>
<div class="gh" style="left:1102px;top:419px;width:82px;height:40px"><div class="hl" style="position:absolute;left:2px;right:0;top:7.8px;text-align:left">Card Holder<br>Name</div></div>
<div class="gh" style="left:1184px;top:419px;width:41px;height:40px"><div class="hl" style="position:absolute;left:2px;right:0;top:7.8px;text-align:left">Card<br>Expiry</div></div>
<div class="gh" style="left:1225px;top:419px;width:123px;height:40px"><div class="hl" style="position:absolute;left:2px;right:0;top:14.3px;text-align:left">Card Number</div></div>
<div class="gh" style="left:1348px;top:419px;width:18px;height:40px"><div class="hl" style="position:absolute;left:2px;right:0;top:14.3px;text-align:left"></div></div>
<div class="gc" style="left:328px;top:459px;width:81px;height:20px"></div>
<div class="gc" style="left:409px;top:459px;width:20px;height:20px"></div>
<div class="gc" style="left:429px;top:459px;width:51px;height:20px"></div>
<div class="gc" style="left:480px;top:459px;width:51px;height:20px"></div>
<div class="gc" style="left:531px;top:459px;width:92px;height:20px"></div>
<div class="gc" style="left:623px;top:459px;width:51px;height:20px"></div>
<div class="gc" style="left:674px;top:459px;width:51px;height:20px"></div>
<div class="gc" style="left:725px;top:459px;width:51px;height:20px"></div>
<div class="gc" style="left:776px;top:459px;width:61px;height:20px"></div>
<div class="gc" style="left:837px;top:459px;width:61px;height:20px"></div>
<div class="gc" style="left:898px;top:459px;width:51px;height:20px"></div>
<div class="gc" style="left:949px;top:459px;width:61px;height:20px"></div>
<div class="gc" style="left:1010px;top:459px;width:51px;height:20px"></div>
<div class="gc" style="left:1061px;top:459px;width:41px;height:20px"></div>
<div class="gc" style="left:1102px;top:459px;width:82px;height:20px"></div>
<div class="gc" style="left:1184px;top:459px;width:41px;height:20px"></div>
<div class="gc" style="left:1225px;top:459px;width:123px;height:20px"></div>
<div class="gc" style="left:1348px;top:459px;width:18px;height:20px"></div>
<div class="a" style="left:411px;top:460px;width:17px;height:16px;background:#dfe3ea;border:1px solid #8792a6"></div><svg style="left:416px;top:465px" width="7" height="5" viewBox="0 0 7 5"><path d="M0 4.500L3.500 0.500L7 4.500z" fill="#3f6fc0"/></svg>
<div class="a" style="left:462px;top:459px;width:17px;height:19px;background:#e1e1e1;border:1px solid #8d8d8d"></div><svg style="left:466px;top:466px" width="9" height="6" viewBox="0 0 9 6"><path d="M0.500 0.800L4.500 4.800L8.500 0.800" fill="none" stroke="#444" stroke-width="1.100"/></svg>
<div class="a" style="left:819px;top:459px;width:17px;height:19px;background:#e1e1e1;border:1px solid #8d8d8d"></div><svg style="left:823px;top:466px" width="9" height="6" viewBox="0 0 9 6"><path d="M0.500 0.800L4.500 4.800L8.500 0.800" fill="none" stroke="#444" stroke-width="1.100"/></svg>
<div class="a" style="left:1026px;top:461px;width:13px;height:13px;background:#fff;border:1px solid #d0d0d0"></div>
<div class="a" style="left:1072px;top:461px;width:13px;height:13px;background:#fff;border:1px solid #d0d0d0"></div>
<div class="a" style="left:1349px;top:459px;width:17px;height:18px;background:#cdcdcd;border:1px solid #c4c4c4"></div>
<svg style="left:1352px;top:461px" width="11" height="14" viewBox="0 0 11 14"><path d="M0.500 2.500h10M3.500 2.300v-1.500h4v1.500" fill="none" stroke="#b0b0b0" stroke-width="1.100"/><path d="M1.500 4h8v9.300h-8z" fill="none" stroke="#b0b0b0" stroke-width="1.100"/><path d="M3.600 5v7.300M5.500 5v7.300M7.400 5v7.300" stroke="#b0b0b0" stroke-width="1"/></svg>
<div class="a" style="left:328px;top:609px;width:1038px;height:17px;background:#6d8ec8;border:1px solid #4d6a9d"></div>
<div class="a" style="left:329px;top:610px;width:5px;height:15px;background:#eef3fb;border-right:1px solid #4d6a9d"></div>
<div class="a" style="left:330px;top:613px;width:1px;height:9px;background:#7d93ba"></div>
<div class="a" style="left:334px;top:610px;width:17px;height:15px;background:linear-gradient(#f6f8fc,#e3e9f3 45%,#b7c4d9);border-right:1px solid #4d6a9d"></div>
<div class="a" style="left:351px;top:610px;width:944px;height:15px;background:linear-gradient(#f6f8fc,#e3e9f3 45%,#b7c4d9);border-right:1px solid #4d6a9d"></div>
<div class="a" style="left:1350px;top:610px;width:15px;height:15px;background:linear-gradient(#f6f8fc,#e3e9f3 45%,#b7c4d9);border-left:1px solid #4d6a9d"></div>
<svg style="left:338px;top:613px" width="6" height="9" viewBox="0 0 6 9"><path d="M6 0L0 4.500L6 9z" fill="#3d4b66"/></svg>
<svg style="left:1355px;top:613px" width="6" height="9" viewBox="0 0 6 9"><path d="M0 0L6 4.500L0 9z" fill="#3d4b66"/></svg>
<div class="a" style="left:819px;top:614px;width:1px;height:7px;background:#3d4b66;box-shadow:2px 0 0 #3d4b66,4px 0 0 #3d4b66,6px 0 0 #3d4b66"></div>
<div class="a" style="left:326px;top:634px;width:1041px;height:210px;background:#fff;border:1px solid #6e6e6e;border-width:2px 1px 1px 2px;border-color:#6a6a6a #d8dde8 #d8dde8 #6a6a6a"></div>
<div class="gh" style="left:328px;top:636px;width:81px;height:40px"><div class="hl" style="position:absolute;left:1px;right:0;top:14.3px;text-align:left">Payment Type</div></div>
<div class="gh" style="left:409px;top:636px;width:20px;height:40px"><div class="hl" style="position:absolute;left:2px;right:0;top:14.3px;text-align:left"></div></div>
<div class="gh" style="left:429px;top:636px;width:51px;height:40px"><div class="hl" style="position:absolute;left:2px;right:0;top:7.8px;text-align:left">Snap<br>Shot</div></div>
<div class="gh" style="left:480px;top:636px;width:51px;height:40px"><div class="hl" style="position:absolute;left:2px;right:0;top:14.3px;text-align:left">Date</div></div>
<div class="gh" style="left:531px;top:636px;width:92px;height:40px"><div class="hl" style="position:absolute;left:2px;right:0;top:14.3px;text-align:left">Remark</div></div>
<div class="gh" style="left:623px;top:636px;width:51px;height:40px"><div class="hr" style="position:absolute;left:0;right:5px;top:14.3px;text-align:right">Amount</div></div>
<div class="gh" style="left:674px;top:636px;width:51px;height:40px"><div class="hr" style="position:absolute;left:0;right:5px;top:1.3px;text-align:right">Amount<br>Tendere<br>d</div></div>
<div class="gh" style="left:725px;top:636px;width:51px;height:40px"><div class="hr" style="position:absolute;left:0;right:5px;top:7.8px;text-align:right">Change<br>Due</div></div>
<div class="gh" style="left:776px;top:636px;width:51px;height:40px"><div class="hc" style="position:absolute;left:0;right:1px;top:14.3px;text-align:center">Process</div></div>
<div class="gh" style="left:827px;top:636px;width:51px;height:40px"><div class="hc" style="position:absolute;left:0;right:1px;top:7.8px;text-align:center">Processe<br>d</div></div>
<div class="gh" style="left:878px;top:636px;width:102px;height:40px"><div class="hl" style="position:absolute;left:2px;right:0;top:14.3px;text-align:left">Bank Name</div></div>
<div class="gh" style="left:980px;top:636px;width:41px;height:40px"><div class="hl" style="position:absolute;left:2px;right:0;top:14.3px;text-align:left">BSBN</div></div>
<div class="gh" style="left:1021px;top:636px;width:62px;height:40px"><div class="hl" style="position:absolute;left:2px;right:0;top:14.3px;text-align:left">Account</div></div>
<div class="gh" style="left:1083px;top:636px;width:205px;height:40px"><div class="hl" style="position:absolute;left:2px;right:0;top:14.3px;text-align:left">Account Name</div></div>
<div class="gh" style="left:1288px;top:636px;width:20px;height:40px"><div class="hl" style="position:absolute;left:2px;right:0;top:14.3px;text-align:left"></div></div>
<div class="gc" style="left:328px;top:676px;width:81px;height:20px;text-align:left;padding-left:1px;padding-top:1px"><span class="hl">Cash</span></div>
<div class="gc" style="left:328px;top:696px;width:81px;height:20px"></div>
<div class="gc w" style="left:409px;top:676px;width:20px;height:20px;text-align:left;padding-left:2px;padding-top:1px"><span class="hl"></span></div>
<div class="gc w" style="left:409px;top:696px;width:20px;height:20px"></div>
<div class="gc w" style="left:429px;top:676px;width:51px;height:20px;text-align:left;padding-left:2px;padding-top:1px"><span class="hl">1</span></div>
<div class="gc" style="left:429px;top:696px;width:51px;height:20px"></div>
<div class="gc w" style="left:480px;top:676px;width:51px;height:20px;text-align:left;padding-left:2px;padding-top:1px"><span class="hl">30/09/202</span></div>
<div class="gc" style="left:480px;top:696px;width:51px;height:20px"></div>
<div class="gc w" style="left:531px;top:676px;width:92px;height:20px;text-align:left;padding-left:2px;padding-top:1px"><span class="hl"></span></div>
<div class="gc" style="left:531px;top:696px;width:92px;height:20px"></div>
<div class="gc w" style="left:623px;top:676px;width:51px;height:20px;text-align:right;padding-right:5px;padding-top:1px"><span class="hr">50.00</span></div>
<div class="gc" style="left:623px;top:696px;width:51px;height:20px"></div>
<div class="gc w" style="left:674px;top:676px;width:51px;height:20px;text-align:right;padding-right:5px;padding-top:1px"><span class="hr">50.00</span></div>
<div class="gc" style="left:674px;top:696px;width:51px;height:20px"></div>
<div class="gc w" style="left:725px;top:676px;width:51px;height:20px;text-align:right;padding-right:5px;padding-top:1px"><span class="hr">0.00</span></div>
<div class="gc" style="left:725px;top:696px;width:51px;height:20px"></div>
<div class="gc w" style="left:776px;top:676px;width:51px;height:20px;text-align:center;padding-top:1px"><span class="hc"></span></div>
<div class="gc" style="left:776px;top:696px;width:51px;height:20px"></div>
<div class="gc w" style="left:827px;top:676px;width:51px;height:20px;text-align:center;padding-top:1px"><span class="hc"></span></div>
<div class="gc" style="left:827px;top:696px;width:51px;height:20px"></div>
<div class="gc w" style="left:878px;top:676px;width:102px;height:20px;text-align:left;padding-left:2px;padding-top:1px"><span class="hl">ANZ / North Sydney</span></div>
<div class="gc" style="left:878px;top:696px;width:102px;height:20px"></div>
<div class="gc w" style="left:980px;top:676px;width:41px;height:20px;text-align:left;padding-left:2px;padding-top:1px"><span class="hl">083-759</span></div>
<div class="gc" style="left:980px;top:696px;width:41px;height:20px"></div>
<div class="gc w" style="left:1021px;top:676px;width:62px;height:20px;text-align:left;padding-left:2px;padding-top:1px"><span class="hl">3899-0200</span></div>
<div class="gc" style="left:1021px;top:696px;width:62px;height:20px"></div>
<div class="gc w" style="left:1083px;top:676px;width:205px;height:20px;text-align:left;padding-left:2px;padding-top:1px"><span class="hl">J H Computer Centre</span></div>
<div class="gc" style="left:1083px;top:696px;width:205px;height:20px"></div>
<div class="gc w" style="left:1288px;top:676px;width:20px;height:20px;text-align:left;padding-left:2px;padding-top:1px"><span class="hl"></span></div>
<div class="gc" style="left:1288px;top:696px;width:20px;height:20px"></div>
<div class="a" style="left:411px;top:677px;width:17px;height:16px;background:#dfe3ea;border:1px solid #8792a6"></div><svg style="left:416px;top:682px" width="7" height="5" viewBox="0 0 7 5"><path d="M0 4.500L3.500 0.500L7 4.500z" fill="#3f6fc0"/></svg>
<div class="a" style="left:462px;top:676px;width:17px;height:19px;background:#e1e1e1;border:1px solid #8d8d8d"></div><svg style="left:466px;top:683px" width="9" height="6" viewBox="0 0 9 6"><path d="M0.500 0.800L4.500 4.800L8.500 0.800" fill="none" stroke="#444" stroke-width="1.100"/></svg>
<div class="a" style="left:792px;top:678px;width:13px;height:13px;background:#fff;border:1px solid #333"></div>
<svg style="left:794px;top:681px" width="10" height="8" viewBox="0 0 10 8"><path d="M0.800 3.800L3.500 6.500L8.800 0.800" fill="none" stroke="#222" stroke-width="1.200"/></svg>
<div class="a" style="left:843px;top:678px;width:13px;height:13px;background:#fff;border:1px solid #d0d0d0"></div>
<div class="a" style="left:792px;top:698px;width:13px;height:13px;background:#fff;border:1px solid #d0d0d0"></div>
<div class="a" style="left:843px;top:698px;width:13px;height:13px;background:#fff;border:1px solid #d0d0d0"></div>
<div class="a" style="left:1290px;top:677px;width:17px;height:18px;background:#dfe3ea;border:1px solid #9aa2b0"></div>
<svg style="left:1293px;top:679px" width="11" height="14" viewBox="0 0 11 14"><path d="M0.500 2.500h10M3.500 2.300v-1.500h4v1.500" fill="none" stroke="#2a2a2a" stroke-width="1.100"/><path d="M1.500 4h8v9.300h-8z" fill="none" stroke="#2a2a2a" stroke-width="1.100"/><path d="M3.600 5v7.300M5.500 5v7.300M7.400 5v7.300" stroke="#2a2a2a" stroke-width="1"/></svg>
<!--GRID2-->
<!--FOOTER-->

<div class="fl" style="left:259px;top:854px">Order Total</div>
<div class="in ft" style="left:325px;top:851px;width:89px"><span class="n">577.23</span></div>
<div class="fl" style="left:838px;top:854px">Delivered Total</div>
<div class="in ft" style="left:937px;top:851px;width:89px"><span class="n">207.20</span></div>
<div class="fl" style="left:1035px;top:853px">TotalPaid</div>
<div class="in ft" style="left:1110px;top:851px;width:89px"><span class="n">50.00</span></div>
<div class="fl" style="left:1209px;top:854px">Balance</div>
<div class="in ft" style="left:1278px;top:851px;width:89px;padding-right:3px"><span class="n">527.23</span></div>
<!-- warehouse bar -->
<div class="a dk" style="left:250px;top:878px;width:1122px;height:24px"></div>
<div class="t" id="wh" style="left:253px;top:885px;font-size:12px;font-weight:bold;color:#fff;letter-spacing:-.41px">Warehouse : Main / New South Wales</div>
<div class="a" style="left:246px;top:901px;width:1126px;height:1px;background:#a3a3a3"></div>
<div class="a dk" style="left:246px;top:902px;width:1126px;height:35px"></div>
<div class="t" id="st" style="left:731px;top:915.5px;font-size:12px;color:#fff;transform:scaleX(.91);transform-origin:0 0">Main / New South Wales</div>
<div class="t" id="ck1" style="left:1317px;top:907.5px;font-size:12px;color:#fff;transform:scaleX(.9);transform-origin:0 0">2:04 PM</div>
<div class="t" id="ck2" style="left:1310px;top:919px;font-size:12px;color:#fff;transform:scaleX(.9);transform-origin:0 0">30/09/2020</div>
<!-- bottom strip -->
<div class="a" style="left:0;top:937px;width:1374px;height:2px;background:linear-gradient(#3b4558,#2f2f2f)"></div>
<div class="a" style="left:210px;top:937px;width:330px;height:2px;background:repeating-linear-gradient(90deg,#999 0 2px,#3a3a3a 2px 5px,#777 5px 6px,#3a3a3a 6px 9px);opacity:.6"></div>
<!-- tray -->
<svg style="left:0;top:0" width="1387" height="939" viewBox="0 0 1387 939">
<rect x="1236" y="913.500" width="9" height="12.500" rx="1" fill="#e4e4e4" stroke="#9a9a9a" stroke-width=".8"/><rect x="1237.500" y="915" width="2.500" height="2.500" fill="#aaa"/><path d="M1237.500 919.500h6M1237.500 921.500h4M1237.500 923.500h3" stroke="#aaa" stroke-width=".9"/><circle cx="1244.200" cy="923.300" r="3.300" fill="#fff" stroke="#8e4bb3" stroke-width="1.300"/><path d="M1244.100 921.500v2h1.500" stroke="#8e4bb3" stroke-width=".9" fill="none"/>
<circle cx="1261.500" cy="917" r="2.700" fill="#2fa866"/><path d="M1257 925c0-4 2-5.500 4.500-5.500s4.500 1.500 4.500 5.500z" fill="#2fa866"/><circle cx="1267.500" cy="916" r="3" fill="#5bb8e8"/><path d="M1262.500 926c0-5 2.300-6.500 5-6.500s5 1.500 5 6.500z" fill="#5bb8e8"/><circle cx="1269" cy="923.500" r="4.300" fill="#e23b3b"/><path d="M1267 921.500l4 4M1271 921.500l-4 4" stroke="#fff" stroke-width="1.400"/>
<circle cx="1292.500" cy="916" r="3.600" fill="none" stroke="#e8b93c" stroke-width="2.400"/><path d="M1290 918.500l-8 7.500" stroke="#e8b93c" stroke-width="2.400" stroke-linecap="round"/><rect x="1290.300" y="921.500" width="6" height="5" fill="#e0a820"/><path d="M1291.500 921.500v-1.500a1.800 1.800 0 0 1 3.600 0v1.500" fill="none" stroke="#d8d8d8" stroke-width="1.100"/>
</svg>
<!-- red circle -->
<svg style="left:0;top:0" width="1387" height="939" viewBox="0 0 1387 939"><path d="M1285.1 818.5C1287.9 817.2 1296.2 812.6 1301.9 810.9C1307.6 809.2 1313.8 808.5 1319.2 808.2C1324.6 807.9 1330.0 808.4 1334.3 809.3C1338.7 810.2 1341.5 811.2 1345.1 813.6C1348.7 816.0 1351.8 819.8 1356.0 823.9C1360.1 827.9 1366.1 833.8 1370.0 837.9C1374.0 842.1 1377.6 845.5 1379.7 848.7C1381.9 852.0 1383.2 854.2 1383.0 857.4C1382.8 860.6 1381.4 864.6 1378.7 868.2C1376.0 871.8 1371.5 876.1 1366.8 879.0C1362.1 881.9 1355.1 883.4 1350.6 885.5C1346.0 887.6 1344.2 890.2 1339.7 891.5C1335.2 892.7 1329.8 893.5 1323.5 893.1C1317.2 892.6 1309.1 890.7 1301.9 888.8C1294.7 886.8 1286.6 884.3 1280.3 881.2C1273.9 878.1 1268.2 874.0 1264.0 870.4C1259.9 866.8 1257.2 863.2 1255.4 859.6C1253.6 856.0 1253.0 852.4 1253.2 848.7C1253.4 845.1 1254.5 841.0 1256.5 837.9C1258.4 834.9 1261.2 832.6 1265.1 830.4C1269.1 828.1 1275.0 825.8 1280.3 824.4C1285.5 823.0 1291.1 822.4 1296.5 822.0C1301.9 821.7 1307.4 822.0 1312.7 822.3C1318.0 822.5 1325.8 823.2 1328.4 823.3" fill="none" stroke="#e5191c" stroke-width="3.3" stroke-linecap="round"/></svg>
<!--STATUS-->
</body>
</html>
